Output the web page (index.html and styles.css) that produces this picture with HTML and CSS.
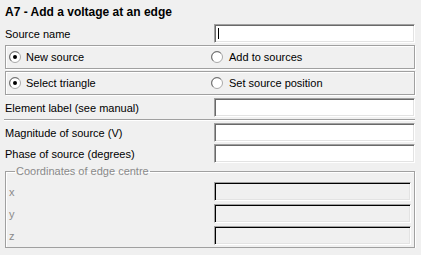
FILE: index.html
```html
<!DOCTYPE html>
<html lang="en">
<head>
  <meta charset="UTF-8" />
  <title>A7 - Add a voltage at an edge</title>
  <link rel="stylesheet" href="styles.css">
</head>
<body>
  <div class="panel">
    <div class="title">A7 - Add a voltage at an edge</div>

    <div class="field first">
      <span class="label">Source name</span>
      <div class="edit"><span class="caret"></span></div>
    </div>

    <div class="radio-box">
      <div class="radio-col">
        <svg class="radio" width="12" height="12" viewBox="0 0 12 12">
          <circle cx="6" cy="6" r="5.5" fill="#fff" stroke="#a8a8a8"/>
          <path d="M2.2 9.8 A5.3 5.3 0 0 1 9.8 2.2" fill="none" stroke="#6e6e6e"/>
          <circle cx="6" cy="6" r="2" fill="#000"/>
        </svg>
        <span>New source</span>
      </div>
      <div class="radio-col">
        <svg class="radio" width="12" height="12" viewBox="0 0 12 12">
          <circle cx="6" cy="6" r="5.5" fill="#fff" stroke="#a8a8a8"/>
          <path d="M2.2 9.8 A5.3 5.3 0 0 1 9.8 2.2" fill="none" stroke="#6e6e6e"/>
        </svg>
        <span>Add to sources</span>
      </div>
    </div>

    <div class="radio-box">
      <div class="radio-col">
        <svg class="radio" width="12" height="12" viewBox="0 0 12 12">
          <circle cx="6" cy="6" r="5.5" fill="#fff" stroke="#a8a8a8"/>
          <path d="M2.2 9.8 A5.3 5.3 0 0 1 9.8 2.2" fill="none" stroke="#6e6e6e"/>
          <circle cx="6" cy="6" r="2" fill="#000"/>
        </svg>
        <span>Select triangle</span>
      </div>
      <div class="radio-col">
        <svg class="radio" width="12" height="12" viewBox="0 0 12 12">
          <circle cx="6" cy="6" r="5.5" fill="#fff" stroke="#a8a8a8"/>
          <path d="M2.2 9.8 A5.3 5.3 0 0 1 9.8 2.2" fill="none" stroke="#6e6e6e"/>
        </svg>
        <span>Set source position</span>
      </div>
    </div>

    <div class="field spaced">
      <span class="label">Element label (see manual)</span>
      <div class="edit"></div>
    </div>

    <div class="separator"></div>

    <div class="field">
      <span class="label">Magnitude of source (V)</span>
      <div class="edit"></div>
    </div>
    <div class="field">
      <span class="label">Phase of source (degrees)</span>
      <div class="edit"></div>
    </div>

    <fieldset class="group">
      <legend>Coordinates of edge centre</legend>
      <div class="field inner">
        <span class="label dim">x</span>
        <div class="edit disabled"></div>
      </div>
      <div class="field inner">
        <span class="label dim">y</span>
        <div class="edit disabled"></div>
      </div>
      <div class="field inner">
        <span class="label dim">z</span>
        <div class="edit disabled"></div>
      </div>
    </fieldset>
  </div>
</body>
</html>
```

FILE: styles.css
```css
body {
  margin: 0;
  background: #f0f0f0;
  color: #000;
  font-family: 'Liberation Sans', Arial, sans-serif;
  font-size: 11px;
}
.panel {
  width: 410px;
  padding: 4px 0 0 5px;
}
.title {
  font-size: 12px;
  font-weight: bold;
  height: 16px;
  line-height: 16px;
}
.field {
  display: flex;
  align-items: center;
  height: 19px;
  margin-top: 2px;
}
.field.first {
  margin-top: 4px;
}
.field.spaced {
  margin-top: 3px;
}
.label {
  width: 209px;
  flex: none;
}
.edit {
  box-sizing: border-box;
  width: 201px;
  height: 19px;
  background: #fff;
  border: 1px solid;
  border-color: #a0a0a0 #fff #fff #a0a0a0;
  box-shadow: inset 1px 1px 0 #696969, inset -1px -1px 0 #e3e3e3;
  padding: 3px 3px 2px;
}
.edit.disabled {
  width: 197px;
  background: #f0f0f0;
  box-shadow: inset 1px 1px 0 #000, inset -1px -1px 0 #e3e3e3;
}
.caret {
  display: block;
  width: 1px;
  height: 11px;
  background: #000;
}
.radio-box {
  box-sizing: border-box;
  display: flex;
  align-items: center;
  height: 24px;
  width: 410px;
  margin-top: 2px;
  border: 1px solid #a0a0a0;
  box-shadow: inset 1px 1px 0 #fff, 1px 1px 0 #fff;
  padding-left: 3px;
}
.radio-col {
  display: flex;
  align-items: center;
  gap: 5px;
  width: 202px;
}
.radio-col + .radio-col {
  gap: 6px;
}
.radio {
  flex: none;
}
.separator {
  width: 411px;
  margin: 2px 0 2px -1px;
  border-top: 1px solid #a0a0a0;
  border-bottom: 1px solid #fff;
}
.group {
  box-sizing: border-box;
  width: 410px;
  margin: 2px 0 0 0;
  padding: 1px 2px 2px 3px;
  border: 1px solid #a0a0a0;
  box-shadow: inset 1px 1px 0 #fff, 1px 1px 0 #fff;
}
.group legend {
  color: #8a8a8a;
  padding: 0 1px;
  margin-left: 6px;
  line-height: 13px;
}
.field.inner {
  margin-top: 3px;
}
.field.inner .label {
  width: 205px;
}
.dim {
  color: #8a8a8a;
}
```
